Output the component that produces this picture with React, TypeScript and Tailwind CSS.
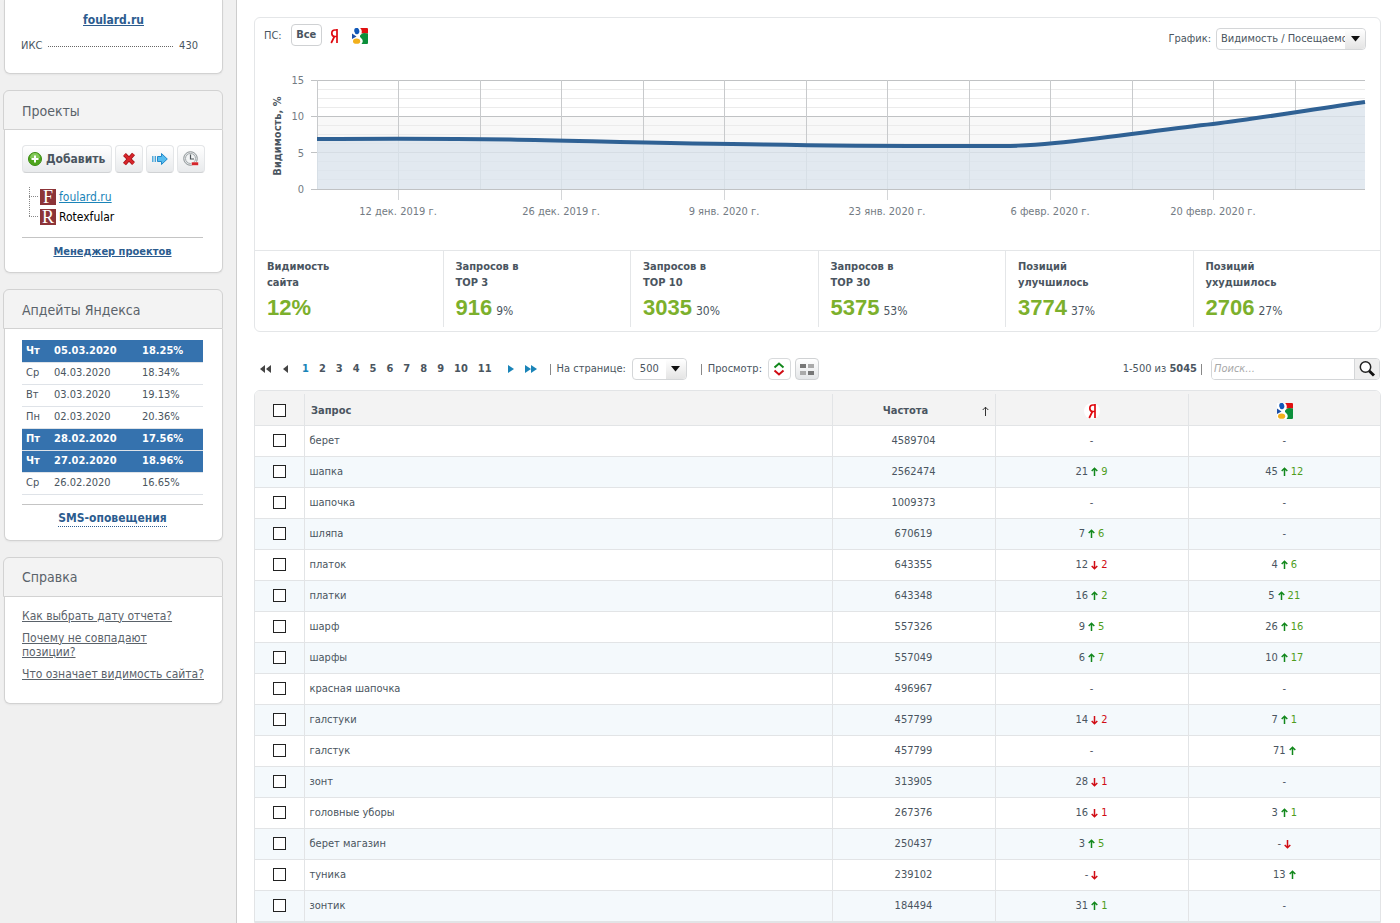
import type { ReactNode } from "react";
import clsx from "clsx";

type Move = { pos: string; dir?: "up" | "down"; diff?: string };
type Row = { query: string; freq: string; yandex: Move; google: Move };

const none: Move = { pos: "-" };

const up = (pos: string, diff?: string): Move => ({ pos, dir: "up", diff });
const down = (pos: string, diff?: string): Move => ({ pos, dir: "down", diff });

const rows: Row[] = [
  { query: "берет", freq: "4589704", yandex: none, google: none },
  { query: "шапка", freq: "2562474", yandex: up("21", "9"), google: up("45", "12") },
  { query: "шапочка", freq: "1009373", yandex: none, google: none },
  { query: "шляпа", freq: "670619", yandex: up("7", "6"), google: none },
  { query: "платок", freq: "643355", yandex: down("12", "2"), google: up("4", "6") },
  { query: "платки", freq: "643348", yandex: up("16", "2"), google: up("5", "21") },
  { query: "шарф", freq: "557326", yandex: up("9", "5"), google: up("26", "16") },
  { query: "шарфы", freq: "557049", yandex: up("6", "7"), google: up("10", "17") },
  { query: "красная шапочка", freq: "496967", yandex: none, google: none },
  { query: "галстуки", freq: "457799", yandex: down("14", "2"), google: up("7", "1") },
  { query: "галстук", freq: "457799", yandex: none, google: up("71") },
  { query: "зонт", freq: "313905", yandex: down("28", "1"), google: none },
  { query: "головные уборы", freq: "267376", yandex: down("16", "1"), google: up("3", "1") },
  { query: "берет магазин", freq: "250437", yandex: up("3", "5"), google: down("-") },
  { query: "туника", freq: "239102", yandex: down("-"), google: up("13") },
  { query: "зонтик", freq: "184494", yandex: up("31", "1"), google: none },
];

const updates = [
  { day: "Чт", date: "05.03.2020", value: "18.25%", active: true },
  { day: "Ср", date: "04.03.2020", value: "18.34%" },
  { day: "Вт", date: "03.03.2020", value: "19.13%" },
  { day: "Пн", date: "02.03.2020", value: "20.36%" },
  { day: "Пт", date: "28.02.2020", value: "17.56%", active: true },
  { day: "Чт", date: "27.02.2020", value: "18.96%", active: true },
  { day: "Ср", date: "26.02.2020", value: "16.65%" },
];

const stats = [
  { title: ["Видимость", "сайта"], value: "12%" },
  { title: ["Запросов в", "TOP 3"], value: "916", share: "9%" },
  { title: ["Запросов в", "TOP 10"], value: "3035", share: "30%" },
  { title: ["Запросов в", "TOP 30"], value: "5375", share: "53%" },
  { title: ["Позиций", "улучшилось"], value: "3774", share: "37%" },
  { title: ["Позиций", "ухудшилось"], value: "2706", share: "27%" },
];

const pages = ["1", "2", "3", "4", "5", "6", "7", "8", "9", "10", "11"];

const dates = [
  { x: 143, label: "12 дек. 2019 г." },
  { x: 306, label: "26 дек. 2019 г." },
  { x: 469, label: "9 янв. 2020 г." },
  { x: 632, label: "23 янв. 2020 г." },
  { x: 795, label: "6 февр. 2020 г." },
  { x: 958, label: "20 февр. 2020 г." },
];

const curve =
  "M62 79C140 78.500 190 78.500 255 79.500C350 81.500 430 84 510 84.500C590 86 660 86 714 86C760 86 770 86 800 83C860 77 910 69 958 64C1010 57.500 1060 49 1110 42";

function YandexIcon() {
  return (
    <svg width="16" height="16" viewBox="0 0 16 16" aria-hidden="true">
      <circle cx="8" cy="8" r="8" fill="#fff" />
      <path
        d="M11 1V15M11 2H8.800C6.900 2 5.800 3.400 5.800 5.200C5.800 7.200 7 8.500 8.800 8.500H11M8.400 8.500L5.200 15"
        fill="none"
        stroke="#e0090f"
        strokeWidth="1.700"
      />
    </svg>
  );
}

function GoogleIcon() {
  return (
    <svg width="16" height="16" viewBox="0 0 16 16" aria-hidden="true">
      <rect width="16" height="16" rx="1" fill="#fff" />
      <path d="M8 0H15Q16 0 16 1V5.500H9.500Q10.500 2 8 0Z" fill="#e01010" />
      <path d="M16 5.500V15Q16 16 15 16H9.500Q12 13 9.500 10.500Q7 8.500 8.500 7Q9.500 5.500 12 5Z" fill="#0b8f3a" />
      <ellipse cx="4.800" cy="3" rx="2.500" ry="3.200" fill="#1158b8" transform="rotate(-12 4.800 3)" />
      <path d="M0 5.500L4.500 8.500L0 11Z" fill="#1c50a8" />
      <ellipse cx="4.600" cy="13.200" rx="3.600" ry="2.600" fill="#f2b01c" />
    </svg>
  );
}

function MoveArrow({ dir }: { dir: "up" | "down" }) {
  return (
    <svg width="7" height="10" viewBox="0 0 7 10" className="inline-block" aria-hidden="true">
      {dir === "up" ? (
        <path d="M3.500 9V1M0.700 4L3.500 1.200L6.300 4" fill="none" stroke="#12881c" strokeWidth="1.500" />
      ) : (
        <path d="M3.500 1V9M0.700 6L3.500 8.800L6.300 6" fill="none" stroke="#d00c14" strokeWidth="1.500" />
      )}
    </svg>
  );
}

function MoveCell({ move }: { move: Move }) {
  return (
    <span className="inline-flex items-center gap-[3px]">
      <span>{move.pos}</span>
      {move.dir && <MoveArrow dir={move.dir} />}
      {move.diff && <span className={move.dir === "up" ? "text-[#4f9d1c]" : "text-[#d00c14]"}>{move.diff}</span>}
    </span>
  );
}

function Card({ title, children }: { title: string; children: ReactNode }) {
  return (
    <section className="flex flex-col">
      <h2 className="flex h-10 items-center rounded-t-md border border-[#d2d2d2] bg-[#f3f3f3] px-[18px] pt-px text-sm text-[#5a626a]">
        {title}
      </h2>
      <div className="ml-px rounded-b-md border border-t-0 border-[#d2d2d2] bg-white px-[17px] shadow-xs">{children}</div>
    </section>
  );
}

function ToolButton({ label, children }: { label: string; children: ReactNode }) {
  return (
    <button
      type="button"
      aria-label={label}
      className="flex h-7 w-7 items-center justify-center rounded border border-[#e4e6e8] border-b-[#d0d2d4] bg-linear-to-b from-white to-[#e8eaec]"
    >
      {children}
    </button>
  );
}

function SelectArrow() {
  return (
    <span className="pointer-events-none absolute top-px right-px flex h-5 w-5 items-center justify-center rounded-r bg-linear-to-b from-white to-[#e4e4e4]">
      <svg width="9" height="6" viewBox="0 0 9 6" aria-hidden="true">
        <path d="M0 0H9L4.500 5.500Z" fill="#111" />
      </svg>
    </span>
  );
}

function Favicon({ letter }: { letter: string }) {
  return (
    <span className="flex h-4 w-4 items-center justify-center bg-[#8c3438] font-['Liberation_Serif',serif] text-lg leading-4 text-white">
      {letter}
    </span>
  );
}

function Sidebar() {
  return (
    <aside className="flex w-[237px] shrink-0 flex-col gap-4 border-r border-[#cdcdcd] bg-[#f0f0f0] pr-[13px] pl-[3px]">
      <div className="ml-px rounded-b-md border border-t-0 border-[#d2d2d2] bg-white pt-3 pr-6 pb-[19px] pl-4 shadow-xs">
        <div className="pl-2 text-center text-xs leading-4 font-bold">
          <a href="#site" className="text-[#2c5c8f] underline">foulard.ru</a>
        </div>
        <div className="mt-2.5 flex h-4 items-center gap-1.5">
          <span>ИКС</span>
          <span className="flex-1 border-b border-dotted border-[#666]" />
          <span>430</span>
        </div>
      </div>

      <Card title="Проекты">
        <div className="flex gap-[3px] pt-[15px]">
          <button
            type="button"
            className="flex h-7 w-[90px] items-center gap-1 rounded border border-[#e4e6e8] border-b-[#d0d2d4] bg-linear-to-b from-white to-[#e8eaec] pl-[5px] text-xs font-bold"
          >
            <svg width="14" height="14" viewBox="0 0 14 14" className="shrink-0" aria-hidden="true">
              <circle cx="7" cy="7" r="6.500" fill="#4fa51d" stroke="#3c8c14" />
              <path d="M2 6A5 5 0 0 1 12 6Q7 7.500 2 6Z" fill="#83c85a" />
              <path d="M7 3.500V10.500M3.500 7H10.500" stroke="#fff" strokeWidth="2" />
            </svg>
            Добавить
          </button>
          <ToolButton label="Удалить">
            <svg width="14" height="14" viewBox="0 0 14 14" aria-hidden="true">
              <path d="M2.500 2.500L11.500 11.500M11.500 2L2.500 12" stroke="#9c1216" strokeWidth="4" />
              <path d="M2.500 2.500L11.500 11.500M11.500 2L2.500 12" stroke="#d8252b" strokeWidth="2.500" />
            </svg>
          </ToolButton>
          <ToolButton label="Переместить">
            <svg width="16" height="14" viewBox="0 0 16 14" aria-hidden="true">
              <path d="M5.500 4.500H9.500V1.500L15.300 7L9.500 12.500V9.500H5.500Z" fill="#56bdf0" stroke="#2388c8" />
              <path d="M0.800 4V10M3.300 4V10" stroke="#3c9fd8" strokeWidth="1.300" />
            </svg>
          </ToolButton>
          <ToolButton label="Расписание">
            <svg width="18" height="16" viewBox="0 0 18 16" className="shrink-0" aria-hidden="true">
              <circle cx="8.500" cy="7.500" r="6.800" fill="#dfe3e5" stroke="#909698" />
              <circle cx="8.500" cy="7.500" r="5" fill="#f2f4f5" stroke="#a4aaac" />
              <path d="M8.500 3.500V8H12" fill="none" stroke="#4c5458" strokeWidth="1.200" />
              <rect x="9.500" y="11" width="7" height="3.500" rx="1" fill="#d4262c" stroke="#fff" strokeWidth="0.500" />
            </svg>
          </ToolButton>
        </div>
        <div className="mt-3.5 flex pl-[7px] text-xs text-black">
          <svg width="11" height="40" viewBox="0 0 11 40" aria-hidden="true">
            <path d="M0.500 0V29.500M0 9.500H9M0 29.500H9" fill="none" stroke="#888" strokeDasharray="1 1" />
          </svg>
          <ul>
            <li className="flex h-5 items-center gap-[3px]">
              <Favicon letter="F" />
              <a href="#foulard" className="text-[#1a84b8] underline">foulard.ru</a>
            </li>
            <li className="flex h-5 items-center gap-[3px]">
              <Favicon letter="R" />
              Rotexfular
            </li>
          </ul>
        </div>
        <div className="mt-2.5 mr-0.5 border-t border-[#c4c4c4] pt-1.5 pb-3 text-center leading-4 font-bold">
          <a href="#manager" className="text-[#2c5c8f] underline">Менеджер проектов</a>
        </div>
      </Card>

      <Card title="Апдейты Яндекса">
        <div className="pt-[11px] pr-0.5">
          <table className="w-full border-collapse">
            <tbody>
              {updates.map((u) => (
                <tr
                  key={u.date}
                  className={clsx("h-[22px] border-b border-[#dfe3e8]", u.active && "bg-[#3572ae] font-bold text-white")}
                >
                  <td className="w-8 pl-1">{u.day}</td>
                  <td className="w-[88px]">{u.date}</td>
                  <td>{u.value}</td>
                </tr>
              ))}
            </tbody>
          </table>
          <div className="mt-[9px] border-t border-[#c4c4c4] pt-[5px] pb-[13px] text-center text-xs font-bold">
            <a href="#sms" className="inline-block border-b border-dotted border-[#2c5c8f] leading-[15px] text-[#2c5c8f]">
              SMS-оповещения
            </a>
          </div>
        </div>
      </Card>

      <Card title="Справка">
        <ul className="flex flex-col gap-2 pt-3 pb-[22px] text-xs leading-[14px] text-[#5a626a]">
          <li><a href="#date" className="underline">Как выбрать дату отчета?</a></li>
          <li className="w-36"><a href="#diff" className="underline">Почему не совпадают позиции?</a></li>
          <li><a href="#visibility" className="whitespace-nowrap underline">Что означает видимость сайта?</a></li>
        </ul>
      </Card>
    </aside>
  );
}

function Chart() {
  return (
    <svg viewBox="0 0 1125 190" className="block w-full" role="img" aria-label="Видимость, %">
      <rect x="62" y="56" width="1048" height="37" fill="#f8f8f8" />
      {[29, 38, 47, 65, 74, 83, 101, 110, 119].map((y) => (
        <path key={y} d={`M62 ${y}.5H1110`} stroke="#ebebeb" />
      ))}
      {[20, 56, 92, 129].map((y) => (
        <path key={y} d={`M56 ${y}.5H1110`} stroke="#c0c2c4" />
      ))}
      {[62, 143, 225, 306, 388, 469, 551, 632, 714, 795, 877, 958, 1040].map((x) => (
        <path key={x} d={`M${x}.5 20V129`} stroke="#c8cacc" />
      ))}
      <path d={`${curve}V129H62Z`} fill="#dbe4ec" fillOpacity="0.8" />
      <path d={curve} fill="none" stroke="#2f6194" strokeWidth="4" />
      {dates.map((d) => (
        <g key={d.x}>
          <path d={`M${d.x}.5 130V140`} stroke="#d4d6d8" />
          <text x={d.x} y="155" textAnchor="middle" fontSize="11" fill="#737b83">{d.label}</text>
        </g>
      ))}
      {[["15", 24], ["10", 60], ["5", 97], ["0", 133]].map(([label, y]) => (
        <text key={label} x="49" y={y} textAnchor="end" fontSize="11" fill="#737b83">{label}</text>
      ))}
      <text transform="translate(26 76) rotate(-90)" textAnchor="middle" fontSize="11" fontWeight="bold" fill="#4a5560">
        Видимость, %
      </text>
    </svg>
  );
}

function ChartPanel() {
  return (
    <section className="rounded-md border border-[#e4e6e8] bg-white">
      <div className="flex h-[42px] items-start pt-1.5 pr-3.5 pl-[9px]">
        <span className="mr-[9px] leading-6">ПС:</span>
        <button type="button" className="h-[22px] w-[31px] rounded border border-[#cfd1d3] bg-white font-bold">Все</button>
        <button type="button" aria-label="Яндекс" className="ml-1 flex h-6 items-center"><YandexIcon /></button>
        <button type="button" aria-label="Google" className="ml-2.5 flex h-6 items-center"><GoogleIcon /></button>
        <div className="ml-auto flex items-center gap-[5px] pt-1">
          <label htmlFor="chart-type">График:</label>
          <span className="relative">
            <select
              id="chart-type"
              className="block h-[22px] w-[150px] appearance-none rounded border border-[#d4d6d8] bg-white pl-1 text-[11px]"
            >
              <option>Видимость / Посещаемо</option>
            </select>
            <SelectArrow />
          </span>
        </div>
      </div>
      <Chart />
      <div className="grid grid-cols-6 border-t border-[#e4e6e8] pb-1">
        {stats.map((s, i) => (
          <div key={s.title.join(" ")} className={clsx("h-[76px] pt-2 pl-3", i > 0 && "border-l border-[#e4e6e8]")}>
            <div className="leading-4 font-bold">
              {s.title[0]}
              <br />
              {s.title[1]}
            </div>
            <div className="flex items-baseline gap-1 pt-px">
              <span className="font-['Liberation_Sans',sans-serif] text-[22px] leading-8 font-bold text-[#7cb02c]">{s.value}</span>
              {s.share && <span className="text-xs">{s.share}</span>}
            </div>
          </div>
        ))}
      </div>
    </section>
  );
}

function Toolbar() {
  return (
    <div className="flex items-center pt-[26px] pr-px pb-2.5 pl-1.5">
      <button type="button" aria-label="В начало">
        <svg width="11" height="8" viewBox="0 0 11 8" aria-hidden="true"><path d="M5 0V8L0 4ZM11 0V8L6 4Z" fill="#444" /></svg>
      </button>
      <button type="button" aria-label="Назад" className="ml-3">
        <svg width="5" height="8" viewBox="0 0 5 8" aria-hidden="true"><path d="M5 0V8L0 4Z" fill="#444" /></svg>
      </button>
      <nav className="ml-3.5 flex gap-[10px] font-bold">
        {pages.map((p) => (
          <a key={p} href={`#page-${p}`} className={p === "1" ? "text-[#1a84b8]" : undefined}>{p}</a>
        ))}
      </nav>
      <button type="button" aria-label="Вперёд" className="ml-4">
        <svg width="6" height="8" viewBox="0 0 6 8" aria-hidden="true"><path d="M0 0V8L6 4Z" fill="#1a84b8" /></svg>
      </button>
      <button type="button" aria-label="В конец" className="ml-[11px]">
        <svg width="12" height="8" viewBox="0 0 12 8" aria-hidden="true"><path d="M0 0V8L6 4ZM6 0V8L12 4Z" fill="#1a84b8" /></svg>
      </button>
      <span className="ml-[13px] h-[11px] border-l border-[#888]" />
      <label htmlFor="per-page" className="ml-1.5">На странице:</label>
      <span className="relative ml-1.5">
        <select id="per-page" className="block h-[22px] w-[55px] appearance-none rounded border border-[#d4d6d8] bg-white pl-[7px] text-[11px]">
          <option>500</option>
        </select>
        <SelectArrow />
      </span>
      <span className="ml-3.5 h-[11px] border-l border-[#888]" />
      <span className="ml-1.5">Просмотр:</span>
      <button type="button" aria-label="Динамика" className="ml-1.5 flex h-[22px] w-[23px] items-center justify-center rounded border border-[#d8dadc] bg-white">
        <svg width="12" height="14" viewBox="0 0 12 14" aria-hidden="true">
          <path d="M1.500 5.500L6 1.500L10.500 5.500" fill="none" stroke="#12881c" strokeWidth="2" />
          <path d="M1.500 8.500L6 12.500L10.500 8.500" fill="none" stroke="#d00c14" strokeWidth="2" />
        </svg>
      </button>
      <button type="button" aria-label="Плитка" className="ml-1 flex h-[22px] w-6 items-center justify-center rounded border border-[#d0d2d4] bg-linear-to-b from-white to-[#e4e6e8]">
        <svg width="14" height="11" viewBox="0 0 14 11" aria-hidden="true">
          <path d="M0 0H6V4H0ZM8 7H14V11H8Z" fill="#777" />
          <path d="M8 0H14V4H8ZM0 7H6V11H0Z" fill="#aaa" />
        </svg>
      </button>
      <span className="ml-auto">1-500 из <b>5045</b></span>
      <span className="ml-1 h-[11px] border-l border-[#888]" />
      <form className="ml-[9px] flex h-[22px] overflow-hidden rounded border border-[#d4d6d8]">
        <input
          type="text"
          aria-label="Поиск"
          placeholder="Поиск..."
          className="w-[142px] bg-white pl-0.5 text-[11px] outline-none placeholder:text-[#a8a8a8] placeholder:italic"
        />
        <button type="button" aria-label="Найти" className="flex w-[25px] items-center justify-center border-l border-[#d4d6d8] bg-[#eee]">
          <svg width="16" height="16" viewBox="0 0 16 16" aria-hidden="true">
            <circle cx="6.500" cy="6" r="5.200" fill="#fff" stroke="#222" strokeWidth="1.500" />
            <path d="M10.300 10L15 14.500" stroke="#111" strokeWidth="3" />
          </svg>
        </button>
      </form>
    </div>
  );
}

function QueryTable() {
  const check = "block h-[13px] w-[13px] appearance-none border border-[#222] bg-white checked:bg-[#3572ae]";
  const headCell = "h-[34px] pt-[3px]";
  const head = "flex h-full items-center border-l border-[#e2e4e6] pt-1";
  return (
    <div className="overflow-hidden rounded-t-md border border-[#e2e4e6]">
      <table className="w-full table-fixed border-collapse text-center">
        <colgroup>
          <col className="w-[49px]" />
          <col />
          <col className="w-[163px]" />
          <col className="w-[193px]" />
          <col className="w-[192px]" />
        </colgroup>
        <thead>
          <tr className="border-b border-[#e2e4e6] bg-[#f3f3f3]">
            <th className="h-[34px] pt-[5px] pl-[18px]">
              <input type="checkbox" aria-label="Выбрать все" className={check} />
            </th>
            <th className={headCell}><div className={clsx(head, "pl-1.5")}>Запрос</div></th>
            <th className={headCell}>
              <div className={clsx(head, "pr-1.5")}>
                <span className="flex-1 pr-1">Частота</span>
                <svg width="7" height="10" viewBox="0 0 7 10" aria-hidden="true">
                  <path d="M3.500 10V1M0.700 4L3.500 1.200L6.300 4" fill="none" stroke="#333" />
                </svg>
              </div>
            </th>
            <th className={headCell}><div className={clsx(head, "justify-center")}><YandexIcon /></div></th>
            <th className={headCell}><div className={clsx(head, "justify-center")}><GoogleIcon /></div></th>
          </tr>
        </thead>
        <tbody>
          {rows.map((r, i) => (
            <tr key={r.query} className={clsx("h-[31px] border-b border-[#e2e4e6]", i % 2 === 1 ? "bg-[#f4f9fc]" : "bg-white")}>
              <td className="pl-[18px]">
                <input type="checkbox" aria-label={r.query} className={check} />
              </td>
              <td className="border-l border-[#e2e4e6] pl-[5px] text-left">{r.query}</td>
              <td className="border-l border-[#e2e4e6]">{r.freq}</td>
              <td className="border-l border-[#e2e4e6]"><MoveCell move={r.yandex} /></td>
              <td className="border-l border-[#e2e4e6]"><MoveCell move={r.google} /></td>
            </tr>
          ))}
        </tbody>
      </table>
    </div>
  );
}

export default function App() {
  return (
    <div className="flex min-h-screen bg-white font-['DejaVu_Sans_Condensed','DejaVu_Sans',sans-serif] text-[11px] leading-4 text-[#4a5560]">
      <Sidebar />
      <main className="min-w-0 flex-1 pt-[17px] pr-[19px] pl-[17px]">
        <ChartPanel />
        <Toolbar />
        <QueryTable />
      </main>
    </div>
  );
}
